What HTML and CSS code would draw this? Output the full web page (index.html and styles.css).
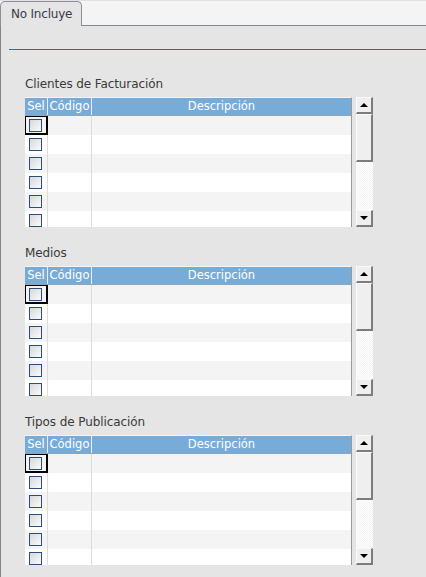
FILE: index.html
```html
<!DOCTYPE html>
<html>
<head>
<meta charset="utf-8">
<link rel="stylesheet" href="styles.css">
</head>
<body>
<div class="tabstrip">
  <div class="tab">No Incluye</div>
</div>
<div class="panel">
  <div class="rule"></div>

  <div class="section">
    <div class="title">Clientes de Facturación</div>
    <div class="gridwrap">
      <div class="table">
        <div class="head">
          <div class="hc c1">Sel</div><div class="hc c2">Código</div><div class="hc c3">Descripción</div>
        </div>
        <div class="body">
          <div class="row alt"><div class="cell c1 focus"><span class="cb"></span></div><div class="cell c2"></div><div class="cell c3"></div></div>
          <div class="row"><div class="cell c1"><span class="cb"></span></div><div class="cell c2"></div><div class="cell c3"></div></div>
          <div class="row alt"><div class="cell c1"><span class="cb"></span></div><div class="cell c2"></div><div class="cell c3"></div></div>
          <div class="row"><div class="cell c1"><span class="cb"></span></div><div class="cell c2"></div><div class="cell c3"></div></div>
          <div class="row alt"><div class="cell c1"><span class="cb"></span></div><div class="cell c2"></div><div class="cell c3"></div></div>
          <div class="row"><div class="cell c1"><span class="cb"></span></div><div class="cell c2"></div><div class="cell c3"></div></div>
        </div>
      </div>
      <div class="scroll">
        <div class="btn"><span class="up"></span></div>
        <div class="thumb"></div>
        <div class="track"></div>
        <div class="btn"><span class="down"></span></div>
      </div>
    </div>
  </div>

  <div class="section">
    <div class="title">Medios</div>
    <div class="gridwrap">
      <div class="table">
        <div class="head">
          <div class="hc c1">Sel</div><div class="hc c2">Código</div><div class="hc c3">Descripción</div>
        </div>
        <div class="body">
          <div class="row alt"><div class="cell c1 focus"><span class="cb"></span></div><div class="cell c2"></div><div class="cell c3"></div></div>
          <div class="row"><div class="cell c1"><span class="cb"></span></div><div class="cell c2"></div><div class="cell c3"></div></div>
          <div class="row alt"><div class="cell c1"><span class="cb"></span></div><div class="cell c2"></div><div class="cell c3"></div></div>
          <div class="row"><div class="cell c1"><span class="cb"></span></div><div class="cell c2"></div><div class="cell c3"></div></div>
          <div class="row alt"><div class="cell c1"><span class="cb"></span></div><div class="cell c2"></div><div class="cell c3"></div></div>
          <div class="row"><div class="cell c1"><span class="cb"></span></div><div class="cell c2"></div><div class="cell c3"></div></div>
        </div>
      </div>
      <div class="scroll">
        <div class="btn"><span class="up"></span></div>
        <div class="thumb"></div>
        <div class="track"></div>
        <div class="btn"><span class="down"></span></div>
      </div>
    </div>
  </div>

  <div class="section">
    <div class="title">Tipos de Publicación</div>
    <div class="gridwrap">
      <div class="table">
        <div class="head">
          <div class="hc c1">Sel</div><div class="hc c2">Código</div><div class="hc c3">Descripción</div>
        </div>
        <div class="body">
          <div class="row alt"><div class="cell c1 focus"><span class="cb"></span></div><div class="cell c2"></div><div class="cell c3"></div></div>
          <div class="row"><div class="cell c1"><span class="cb"></span></div><div class="cell c2"></div><div class="cell c3"></div></div>
          <div class="row alt"><div class="cell c1"><span class="cb"></span></div><div class="cell c2"></div><div class="cell c3"></div></div>
          <div class="row"><div class="cell c1"><span class="cb"></span></div><div class="cell c2"></div><div class="cell c3"></div></div>
          <div class="row alt"><div class="cell c1"><span class="cb"></span></div><div class="cell c2"></div><div class="cell c3"></div></div>
          <div class="row"><div class="cell c1"><span class="cb"></span></div><div class="cell c2"></div><div class="cell c3"></div></div>
        </div>
      </div>
      <div class="scroll">
        <div class="btn"><span class="up"></span></div>
        <div class="thumb"></div>
        <div class="track"></div>
        <div class="btn"><span class="down"></span></div>
      </div>
    </div>
  </div>
</div>
</body>
</html>
```
FILE: styles.css
```css
* { box-sizing: border-box; }
html, body { margin: 0; padding: 0; }
body {
  width: 426px;
  height: 577px;
  overflow: hidden;
  background: #e5e5e5;
  font-family: "DejaVu Sans", sans-serif;
  font-size: 11px;
  color: #3a3a3a;
}
.tabstrip {
  height: 26px;
  background: #f4f4f4;
  border-top: 1px solid #e2e2e2;
  border-bottom: 1px solid #828a90;
  display: flex;
  align-items: flex-end;
}
.tab {
  width: 82px;
  height: 25px;
  margin-bottom: -1px;
  background: #e5e5e5;
  border: 1px solid #8a9096;
  border-bottom: none;
  border-radius: 5px 5px 0 0;
  padding: 5px 0 0 10px;
  font-size: 12px;
  letter-spacing: -0.2px;
  color: #3a3a48;
}
.panel {
  height: 551px;
  border-left: 1px solid #80868a;
  padding-top: 23px;
}
.rule {
  height: 1px;
  margin-left: 8px;
  background: #2f6ea5;
}
.section {
  padding-left: 24px;
  padding-top: 25px;
}
.section + .section { padding-top: 17px; }
.title {
  height: 22px;
  padding-top: 2px;
  line-height: 15px;
  font-size: 12px;
  letter-spacing: -0.1px;
  color: #3a3a3a;
}
.gridwrap {
  display: flex;
  gap: 4px;
}
.table {
  width: 327px;
  height: 130px;
  overflow: hidden;
  border-top: 1px solid #f4f4f4;
  border-right: 1px solid #9a9a9a;
  background: #fff;
}
.head {
  display: flex;
  height: 18px;
  background: #77acd9;
  border-bottom: 1px solid #8fa6b8;
  color: #fff;
}
.hc {
  line-height: 17px;
  text-align: center;
  font-size: 11.5px;
}
.c1 { width: 23px; border-right: 1px solid #e8eef4; }
.c2 { width: 44px; border-right: 1px solid #e8eef4; }
.c3 { flex: 1; }
.head .c3 { border-right: none; }
.row {
  display: flex;
  height: 19px;
  background: #fff;
}
.row.alt { background: #f4f4f4; }
.cell { height: 19px; }
.row .c1, .row .c2 { border-right: 1px solid #dcdcdc; }
.row .c1 {
  padding: 3px 0 0 4px;
}
.row .c1.focus {
  border: 1px solid #000;
  border-right-width: 2px;
  border-bottom-width: 2px;
  padding: 2px 0 0 3px;
}
.cb {
  display: block;
  width: 13px;
  height: 13px;
  border: 1px solid #2b4f7c;
  background: linear-gradient(135deg, #d8d8d8, #fbfbfb);
}
.scroll {
  width: 17px;
  height: 130px;
  display: flex;
  flex-direction: column;
}
.btn, .thumb {
  background: #efefef;
  border-top: 1px solid #fafafa;
  border-left: 1px solid #fafafa;
  border-right: 2px solid #7c7c7c;
  border-bottom: 2px solid #7c7c7c;
}
.btn {
  height: 17px;
  display: flex;
  align-items: center;
  justify-content: center;
}
.thumb { height: 48px; }
.track {
  flex: 1;
  background: repeating-conic-gradient(#ffffff 0 25%, #f3f3f3 0 50%) 0 0 / 2px 2px;
}
.up, .down {
  width: 0;
  height: 0;
  border-left: 4px solid transparent;
  border-right: 4px solid transparent;
}
.up { border-bottom: 4px solid #000; }
.down { border-top: 4px solid #000; }
```
